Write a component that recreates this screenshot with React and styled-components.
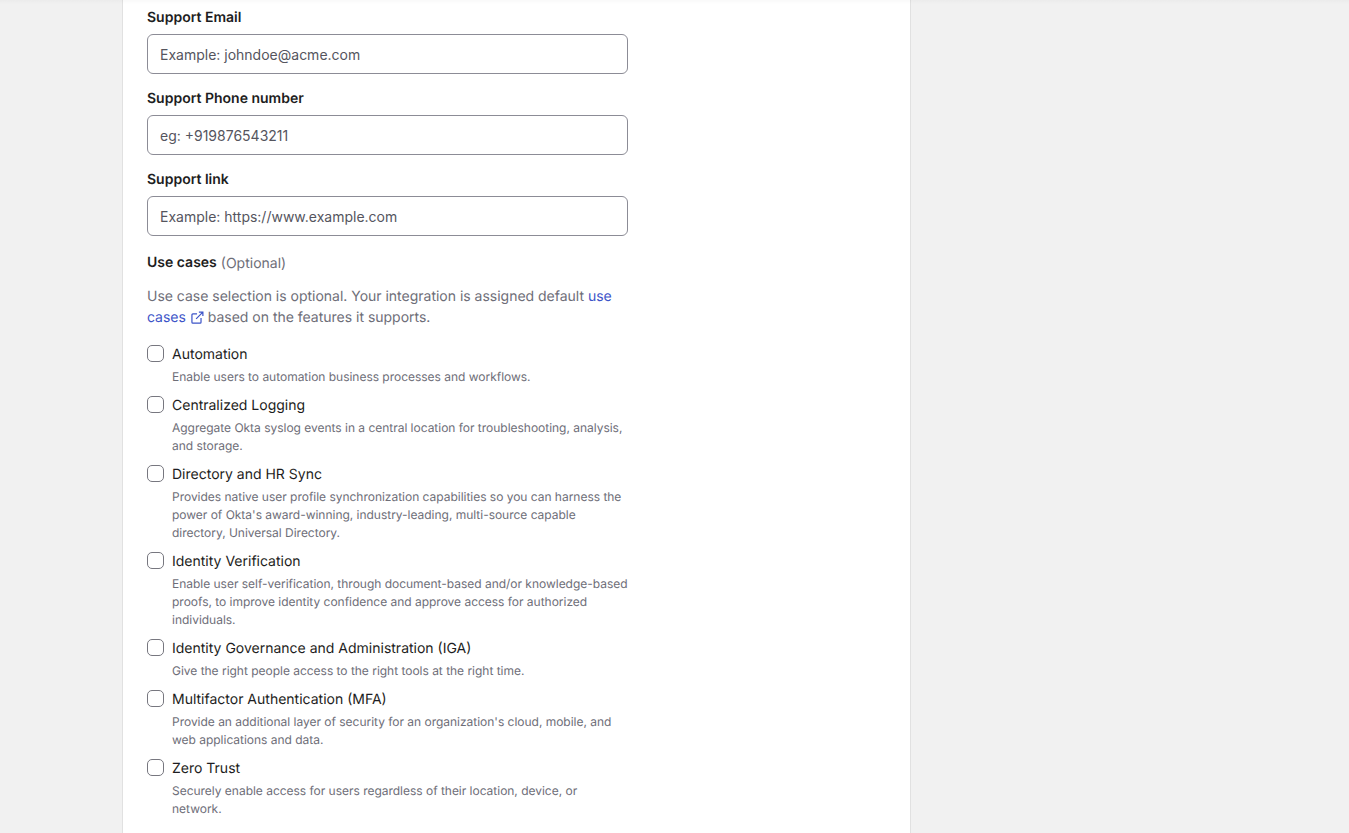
import React from "react";
import styled, { createGlobalStyle } from "styled-components";

const Global = createGlobalStyle`
  html, body { margin: 0; padding: 0; height: 833px; overflow: hidden; background: #f1f1f1; }
  body { font-family: Inter, "Liberation Sans", sans-serif; color: #1d1d21; text-rendering: geometricPrecision; }
`;
const Page = styled.div`
  position: relative;
  height: 833px;
  overflow: hidden;
  padding-left: 122px;
  box-sizing: border-box;
`;
const TopShade = styled.div`
  position: absolute;
  top: 0; left: 0; right: 0;
  height: 4px;
  background: linear-gradient(rgba(0,0,0,0.025), rgba(0,0,0,0));
`;
const Card = styled.main`
  width: 789px;
  height: 833px;
  box-sizing: border-box;
  background: #fff;
  border-left: 1px solid #e1e1e1;
  border-right: 1px solid #e1e1e1;
  padding: 9px 0 0 24px;
`;
const Form = styled.div`
  width: 481px;
`;
const Field = styled.div`
  display: flex;
  flex-direction: column;
  margin-bottom: 16px;
`;
const Label = styled.label`
  font-size: 14px;
  line-height: 18px;
  font-weight: 600;
  color: #1d1d21;
  margin-bottom: 7px;
`;
const Input = styled.input`
  box-sizing: border-box;
  width: 481px;
  height: 40px;
  border: 1px solid #8c8c96;
  border-radius: 6px;
  padding: 0 12px;
  font: 400 14px Inter, sans-serif;
  background: #fff;
  outline: none;
  &::placeholder { color: #55555e; opacity: 1; }
`;
const Heading = styled.div`
  display: flex;
  align-items: flex-start;
  gap: 4px;
  margin-top: 18px;
`;
const HeadingText = styled.span`
  font-size: 14px;
  line-height: 18px;
  font-weight: 600;
  color: #1d1d21;
`;
const Optional = styled.span`
  font-size: 14px;
  line-height: 20px;
  font-weight: 400;
  color: #6e6e78;
`;
const Intro = styled.p`
  margin: 12px 0 16px;
  font-size: 14px;
  line-height: 21px;
  letter-spacing: -0.012px;
  color: #6e6e78;
`;
const DocLink = styled.a`
  color: #3d54c8;
  text-decoration: none;
`;
const LinkIcon = styled.svg`
  width: 13px;
  height: 13px;
  vertical-align: -2px;
  margin: 0 0 0 1px;
`;
const Option = styled.div`
  display: grid;
  grid-template-columns: 17px 1fr;
  column-gap: 8px;
  margin-bottom: 9px;
`;
const Box = styled.input.attrs({ type: "checkbox" })`
  appearance: none;
  box-sizing: border-box;
  width: 17px;
  height: 17px;
  margin: 1px 0 0 0;
  border: 1px solid #77777f;
  border-radius: 5px;
  background: #fff;
`;
const OptionTitle = styled.label`
  font-size: 14px;
  line-height: 21px;
  color: #1d1d21;
`;
const OptionHelp = styled.div`
  grid-column: 2;
  font-size: 12px;
  line-height: 18px;
  letter-spacing: -0.02px;
  margin-top: 3px;
  color: #6e6e78;
  white-space: nowrap;
`;

const options = [
  ["Automation", ["Enable users to automation business processes and workflows."]],
  ["Centralized Logging", ["Aggregate Okta syslog events in a central location for troubleshooting, analysis,", "and storage."]],
  ["Directory and HR Sync", ["Provides native user profile synchronization capabilities so you can harness the", "power of Okta's award-winning, industry-leading, multi-source capable", "directory, Universal Directory."]],
  ["Identity Verification", ["Enable user self-verification, through document-based and/or knowledge-based", "proofs, to improve identity confidence and approve access for authorized", "individuals."]],
  ["Identity Governance and Administration (IGA)", ["Give the right people access to the right tools at the right time."]],
  ["Multifactor Authentication (MFA)", ["Provide an additional layer of security for an organization's cloud, mobile, and", "web applications and data."]],
  ["Zero Trust", ["Securely enable access for users regardless of their location, device, or", "network."]],
];

const fields = [
  ["Support Email", "Example: johndoe@acme.com"],
  ["Support Phone number", "eg: +919876543211"],
  ["Support link", "Example: https://www.example.com"],
];

export default function App() {
  return (
    <Page>
      <Global />
      <Card>
        <Form>
          {fields.map(([l, p]) => (
            <Field key={l}>
              <Label>{l}</Label>
              <Input placeholder={p} />
            </Field>
          ))}
          <Heading>
            <HeadingText>Use cases</HeadingText>
            <Optional>(Optional)</Optional>
          </Heading>
          <Intro>
            Use case selection is optional. Your integration is assigned default <DocLink href="#">use cases{" "}
              <LinkIcon viewBox="0 0 14 14" fill="none" stroke="#3d54c8" strokeWidth="1.3">
                <path d="M6.5 3.2H2a1 1 0 0 0-1 1V12a1 1 0 0 0 1 1h7.8a1 1 0 0 0 1-1V7.5" />
                <path d="M5.5 8.5 12.5 1.5M8.5 1.2h4.3v4.3" />
              </LinkIcon></DocLink>{" "}
            based on the features it supports.
          </Intro>
          {options.map(([t, lines]) => (
            <Option key={t}>
              <Box />
              <OptionTitle>{t}</OptionTitle>
              <OptionHelp>{lines.map((x) => <div key={x}>{x}</div>)}</OptionHelp>
            </Option>
          ))}
        </Form>
      </Card>
      <TopShade />
    </Page>
  );
}
